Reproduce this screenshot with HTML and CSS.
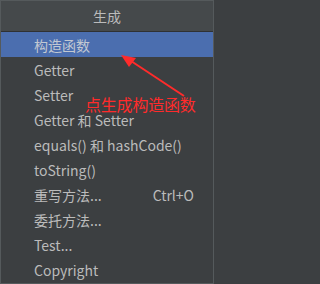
FILE: index.html
```html
<!DOCTYPE html>
<html>
<head>
<meta charset="utf-8">
<link rel="stylesheet" href="styles.css">
</head>
<body>
<div class="menu">
  <div class="header">生成</div>
  <ul class="items">
    <li class="item selected"><span>构造函数</span></li>
    <li class="item"><span>Getter</span></li>
    <li class="item"><span>Setter</span></li>
    <li class="item"><span>Getter 和 Setter</span></li>
    <li class="item"><span>equals() 和 hashCode()</span></li>
    <li class="item"><span>toString()</span></li>
    <li class="item"><span>重写方法...</span><span class="shortcut">Ctrl+O</span></li>
    <li class="item"><span>委托方法...</span></li>
    <li class="item"><span>Test...</span></li>
    <li class="item"><span>Copyright</span></li>
  </ul>
  <div class="note">点生成构造函数</div>
  <svg class="arrow" width="214" height="284" viewBox="0 0 214 284">
    <line x1="184" y1="96" x2="128" y2="59" stroke="#ff2b2b" stroke-width="2"/>
    <polygon points="121,55 136,58 129,67" fill="#ff2b2b"/>
  </svg>
</div>
</body>
</html>
```
FILE: styles.css
```css
html, body {
  margin: 0;
  padding: 0;
  background: #3c3f41;
}
.menu {
  position: relative;
  width: 212px;
  height: 282px;
  border: 1px solid #555a5c;
  background: #3c3f41;
  font-family: "Noto Sans CJK SC", "Noto Sans", sans-serif;
  font-size: 14px;
  color: #bbbbbb;
  overflow: hidden;
}
.header {
  height: 30px;
  line-height: 30px;
  text-align: center;
  background: #45494b;
  border-bottom: 1px solid #2f3133;
}
.items {
  list-style: none;
  margin: 0;
  padding: 0;
}
.item {
  height: 25px;
  line-height: 16px;
  display: flex;
  align-items: center;
  justify-content: space-between;
  padding: 0 19px 0 33px;
  white-space: nowrap;
}
.item.selected {
  background: #4b6eaf;
  color: #c2c8d2;
}
.note {
  position: absolute;
  left: 84px;
  top: 96px;
  font-size: 16px;
  line-height: 14px;
  color: #ff2b2b;
  letter-spacing: -0.2px;
}
.arrow {
  position: absolute;
  left: -1px;
  top: -1px;
}
```
